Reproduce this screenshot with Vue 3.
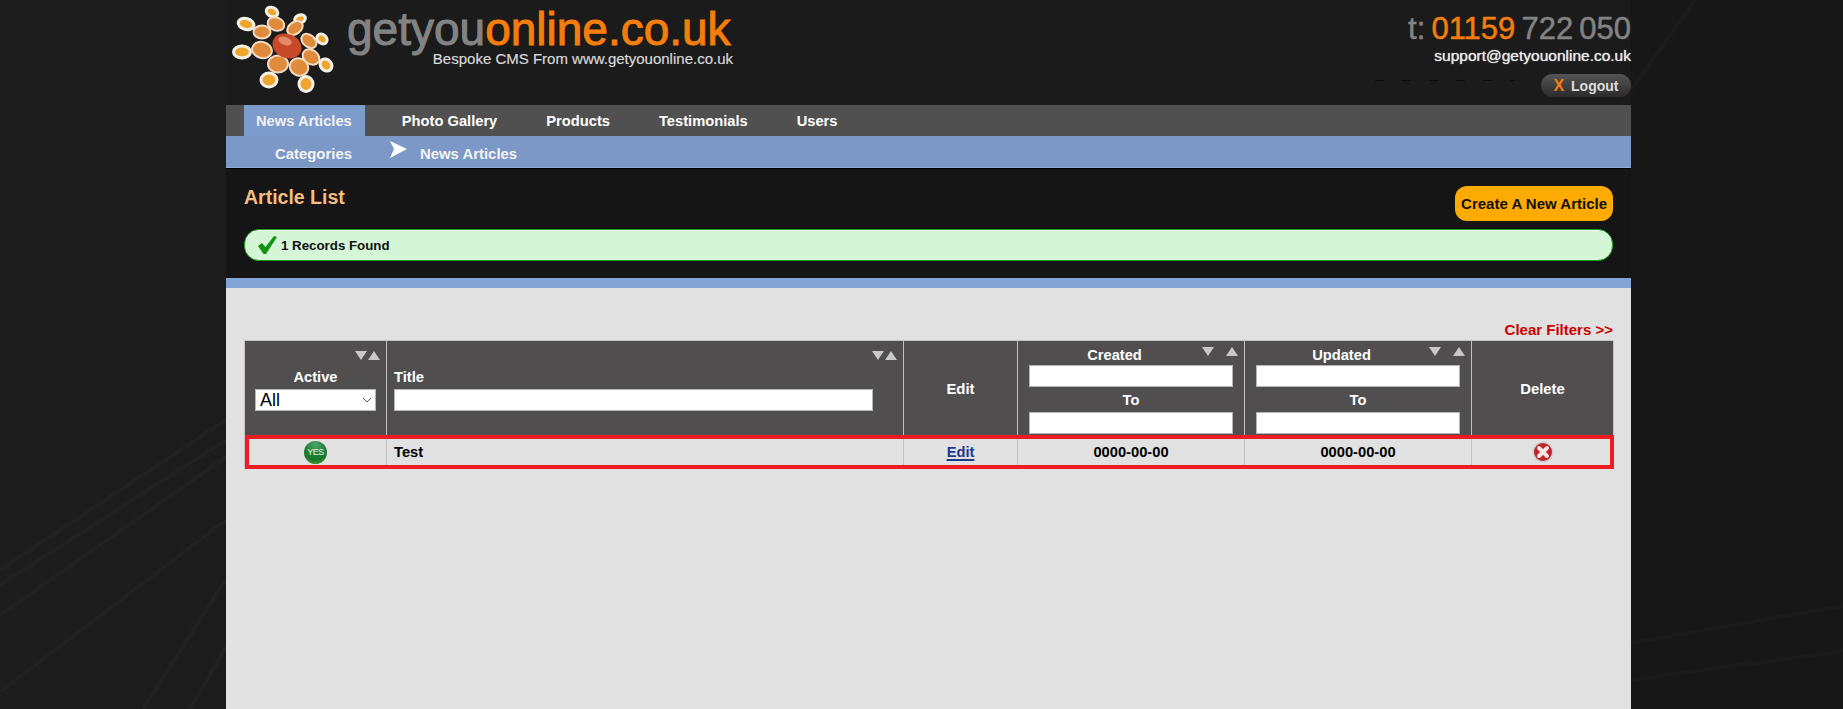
<template>
  <div class="page">
    <svg class="streaks" width="1843" height="709" viewBox="0 0 1843 709">
      <g fill="none" stroke="#212121" stroke-width="4">
        <path d="M0 570 L226 420" />
        <path d="M0 585 L226 440" />
        <path d="M0 615 L226 457" />
        <path d="M0 692 L226 520" />
        <path d="M143 709 L226 579" />
        <path d="M190 709 L226 647" />
      </g>
      <g fill="none" stroke="#1b1b1b" stroke-width="4">
        <path d="M1631 90 L1695 0" />
        <path d="M1631 643 L1843 606" />
        <path d="M1631 680 L1843 651" />
      </g>
    </svg>
    <div class="wrap">
      <header class="top">
        <div class="brand">
          <svg class="logo" width="116" height="100" viewBox="0 0 116 100">
            <g fill="#f0a52f" stroke="#f4f1e8" stroke-width="3">
              <ellipse cx="46" cy="12" rx="6" ry="4.5" transform="rotate(25 46 12)" />
              <ellipse cx="74" cy="19" rx="5.5" ry="4" transform="rotate(-20 74 19)" />
              <ellipse cx="20" cy="24" rx="8" ry="5.5" transform="rotate(15 20 24)" />
              <ellipse cx="96" cy="39" rx="5.5" ry="4.5" transform="rotate(40 96 39)" />
              <ellipse cx="16" cy="52" rx="8.5" ry="6" />
              <ellipse cx="100" cy="65" rx="6.5" ry="5.5" transform="rotate(50 100 65)" />
              <ellipse cx="43" cy="80" rx="8" ry="7" />
              <ellipse cx="80" cy="84" rx="7" ry="7.5" />
            </g>
            <g fill="#e08a3c" stroke="#f2dcc2" stroke-width="2">
              <ellipse cx="50" cy="24" rx="8.5" ry="6.5" transform="rotate(20 50 24)" />
              <ellipse cx="69" cy="28" rx="8.5" ry="6" transform="rotate(-35 69 28)" />
              <ellipse cx="36" cy="32" rx="8.5" ry="6.5" />
              <ellipse cx="83" cy="41" rx="8.5" ry="6" transform="rotate(40 83 41)" />
              <ellipse cx="36" cy="50" rx="10" ry="8" transform="rotate(15 36 50)" />
              <ellipse cx="85" cy="57" rx="9" ry="7" transform="rotate(35 85 57)" />
              <ellipse cx="52" cy="64" rx="10" ry="8.5" />
              <ellipse cx="73" cy="67" rx="9.5" ry="8.5" transform="rotate(30 73 67)" />
            </g>
            <ellipse cx="61" cy="46" rx="15" ry="12" transform="rotate(25 61 46)" fill="#c8492a" />
            <ellipse cx="59" cy="41" rx="7" ry="4" transform="rotate(20 59 41)" fill="#e28a68" />
          </svg>
          <div class="wordmark">
            <div class="name"><span class="grey">getyou</span><span class="orange">online.co.uk</span></div>
            <div class="tagline">Bespoke CMS From www.getyouonline.co.uk</div>
          </div>
        </div>
        <div class="contact">
          <div class="phone"><span class="grey">t:</span> <span class="orange">01159</span> <span class="grey">722 050</span></div>
          <div class="email">support@getyouonline.co.uk</div>
          <div class="logout-row">
            <span class="specks"></span>
            <a class="logout"><span class="x">X</span> Logout</a>
          </div>
        </div>
      </header>

      <nav class="nav">
        <a v-for="item in navItems" :key="item" class="nav-item" :class="{ active: item === 'News Articles' }">{{ item }}</a>
      </nav>
      <nav class="subnav">
        <a class="sub-item">Categories</a>
        <svg class="sub-arrow" width="18" height="17" viewBox="0 0 18 17"><path d="M1 0 L18 8 L1 17 L5 8 Z" fill="#fff" /></svg>
        <a class="sub-item">News Articles</a>
      </nav>

      <section class="head">
        <div class="head-row">
          <h1>Article List</h1>
          <a class="create">Create A New Article</a>
        </div>
        <div class="found">
          <svg width="21" height="20" viewBox="0 0 21 20"><path d="M1 11 L5 8 L8.5 12 L17 1 L20 2 L9 19 L6.5 19 Z" fill="#109410" /></svg>
          <span>1 Records Found</span>
        </div>
      </section>
      <div class="band"></div>

      <main class="content">
        <a class="clear">Clear Filters &gt;&gt;</a>
        <table class="list">
          <colgroup>
            <col v-for="w in colWidths" :key="w.id" :style="{ width: w.px + 'px' }" />
          </colgroup>
          <thead>
            <tr>
              <th class="top-align">
                <div class="sorts sorts-tight"><i class="down"></i><i class="up"></i></div>
                <div class="label stacked">Active</div>
                <div class="select-box">
                  <select class="filter-select"><option>All</option></select>
                  <svg class="chevron" width="10" height="6" viewBox="0 0 10 6"><path d="M1 1 L5 5 L9 1" fill="none" stroke="#555" stroke-width="1" /></svg>
                </div>
              </th>
              <th class="top-align title-col">
                <div class="sorts sorts-tight"><i class="down"></i><i class="up"></i></div>
                <div class="label stacked title-label">Title</div>
                <input class="filter title-input" type="text" />
              </th>
              <th class="plain">Edit</th>
              <th v-for="col in dateCols" :key="col" class="top-align date-col">
                <div class="date-head">
                  <span class="label">{{ col }}</span>
                  <div class="sorts sorts-wide"><i class="down"></i><i class="up"></i></div>
                </div>
                <input class="filter" type="text" />
                <div class="label to">To</div>
                <input class="filter" type="text" />
              </th>
              <th class="plain">Delete</th>
            </tr>
          </thead>
          <tbody>
            <tr class="row">
              <td>
                <span class="yes">YES</span>
              </td>
              <td class="left">Test</td>
              <td><a class="edit">Edit</a></td>
              <td>0000-00-00</td>
              <td>0000-00-00</td>
              <td>
                <svg class="del" width="22" height="22" viewBox="0 0 22 22">
                  <circle cx="11" cy="11" r="10.5" fill="#cfcfcf" />
                  <circle cx="11" cy="11" r="9" fill="#c4212a" />
                  <path d="M7 7 L15 15 M15 7 L7 15" stroke="#f0e4e4" stroke-width="4" stroke-linecap="round" />
                </svg>
              </td>
            </tr>
          </tbody>
        </table>
      </main>
    </div>
  </div>
</template>

<script setup>
const navItems = ['News Articles', 'Photo Gallery', 'Products', 'Testimonials', 'Users']
const dateCols = ['Created', 'Updated']
const colWidths = [
  { id: 'active', px: 142 },
  { id: 'title', px: 517 },
  { id: 'edit', px: 114 },
  { id: 'created', px: 227 },
  { id: 'updated', px: 227 },
  { id: 'delete', px: 142 },
]
</script>

<style>
html, body {
  margin: 0;
  background: #1c1c1c;
}
</style>

<style scoped>
.page {
  position: relative;
  height: 709px;
  overflow: hidden;
  background: linear-gradient(90deg, #1d1d1d 0, #1c1c1c 226px, #171717 1631px);
  font-family: "Liberation Sans", Arial, sans-serif;
}
.streaks {
  position: absolute;
  left: 0;
  top: 0;
}
.wrap {
  position: relative;
  width: 1405px;
  height: 709px;
  margin-left: 226px;
  display: flex;
  flex-direction: column;
}
.top {
  height: 105px;
  display: flex;
  justify-content: space-between;
  background: #1b1b1b;
}
.brand {
  display: flex;
}
.logo {
  display: block;
}
.wordmark {
  margin-left: 5px;
  width: 386px;
}
.name {
  margin-top: 6px;
  font-size: 46px;
  line-height: 46px;
  -webkit-text-stroke: 1px currentColor;
  white-space: nowrap;
}
.grey {
  color: #838383;
}
.orange {
  color: #f47d0b;
}
.tagline {
  color: #d8d8d8;
  font-size: 15px;
  line-height: 14px;
  -webkit-text-stroke: 0.2px currentColor;
  text-align: right;
  white-space: nowrap;
}
.contact {
  display: flex;
  flex-direction: column;
  align-items: flex-end;
}
.phone {
  margin-top: 12px;
  font-size: 31px;
  line-height: 34px;
  word-spacing: -2.5px;
  -webkit-text-stroke: 0.5px currentColor;
  white-space: nowrap;
}
.email {
  margin-top: 1px;
  color: #e8e8e8;
  font-size: 15.5px;
  line-height: 18px;
  text-shadow: 0 0 1px #e8e8e8;
}
.logout-row {
  display: flex;
  margin-top: 9px;
}
.specks {
  width: 140px;
  height: 1px;
  margin: 6px 26px 0 0;
  background: repeating-linear-gradient(90deg, #0b0b0b 0 9px, transparent 9px 27px);
}
.logout {
  width: 90px;
  height: 23px;
  border-radius: 12px;
  background: linear-gradient(#555, #2b2b2b);
  color: #ddd;
  font-size: 14px;
  font-weight: bold;
  line-height: 23px;
  text-align: center;
  white-space: nowrap;
}
.x {
  margin-right: 3px;
  color: #f47d0b;
  font-size: 16px;
}
.nav {
  height: 31px;
  display: flex;
  padding-left: 18px;
  background: #505050;
}
.nav-item {
  height: 31px;
  padding: 0 12px;
  margin-right: 25px;
  color: #fff;
  font-size: 14.7px;
  font-weight: bold;
  line-height: 33px;
}
.nav-item.active {
  padding-right: 13px;
  background: #7d9bcb;
  color: #f2f2f2;
}
.subnav {
  display: flex;
  align-items: center;
  padding: 4px 0 0 49px;
  box-sizing: border-box;
  height: 32px;
  background: #7b98c6;
  border-bottom: 1px solid #8fabd6;
}
.sub-item {
  color: #f3f3f3;
  font-size: 14.9px;
  font-weight: bold;
}
.sub-arrow {
  margin: 0 13px 8px 37px;
}
.head {
  height: 110px;
  padding: 0 18px;
  box-sizing: border-box;
  background: #151515;
  border-top: 1px solid #000;
}
.head-row {
  height: 60px;
  display: flex;
  justify-content: space-between;
}
h1 {
  margin: 15px 0 0;
  color: #f7bd80;
  font-size: 19.5px;
  font-weight: bold;
  line-height: 26px;
}
.create {
  height: 35px;
  margin-top: 17px;
  padding: 0 6px;
  border-radius: 12px;
  background: #fdab00;
  color: #111;
  font-size: 15px;
  font-weight: bold;
  line-height: 35px;
}
.found {
  height: 32px;
  box-sizing: border-box;
  display: flex;
  align-items: center;
  gap: 3px;
  padding-left: 12px;
  border: 1px solid #1b9b1b;
  border-radius: 15px;
  background: #d5f5d7;
  box-shadow: inset 0 1px 0 #f3fff3;
  color: #111;
  font-size: 13.3px;
  font-weight: bold;
}
.band {
  height: 10px;
  background: #83a4d5;
}
.content {
  flex: 1;
  padding: 32px 18px 0;
  background: #e1e1e1;
}
.clear {
  display: block;
  color: #cc0000;
  font-size: 15px;
  font-weight: bold;
  line-height: 20px;
  text-align: right;
}
.list {
  width: 1369px;
  table-layout: fixed;
  border-collapse: collapse;
}
th {
  height: 94px;
  padding: 0;
  border: 1px solid #c3c3c3;
  border-bottom: 0;
  background: #504e4f;
  color: #fff;
  font-size: 14.9px;
  font-weight: bold;
  text-align: center;
  vertical-align: middle;
  overflow: hidden;
}
.plain {
  padding-top: 2px;
  box-sizing: border-box;
}
.top-align {
  vertical-align: top;
}
.sorts {
  display: flex;
  justify-content: flex-end;
  align-items: center;
}
.sorts-tight {
  gap: 1px;
  height: 9px;
  margin: 10px 6px 0 0;
}
.sorts-wide {
  position: absolute;
  right: 6px;
  top: 6px;
  gap: 12px;
}
.down {
  width: 0;
  height: 0;
  border-left: 6px solid transparent;
  border-right: 6px solid transparent;
  border-top: 9px solid #c8c8c8;
}
.up {
  width: 0;
  height: 0;
  border-left: 6px solid transparent;
  border-right: 6px solid transparent;
  border-bottom: 9px solid #c8c8c8;
}
.label {
  font-size: 14.7px;
  line-height: 20px;
}
.stacked {
  margin: 7px 0 2px;
}
.title-label {
  padding-left: 7px;
  text-align: left;
}
.select-box {
  position: relative;
  width: 121px;
  margin: 0 auto;
}
.filter-select {
  display: block;
  width: 100%;
  height: 22px;
  padding: 0 0 0 4px;
  appearance: none;
  box-sizing: border-box;
  border: 1px solid #b5b5b5;
  border-radius: 0;
  background: #fff;
  color: #000;
  font-family: "Liberation Sans", Arial, sans-serif;
  font-size: 18px;
}
.chevron {
  position: absolute;
  right: 4px;
  top: 8px;
  pointer-events: none;
}
.filter {
  display: block;
  width: 204px;
  height: 22px;
  margin: 0 auto;
  padding: 0;
  box-sizing: border-box;
  border: 1px solid #b5b5b5;
  background: #fff;
}
.title-input {
  width: 479px;
  margin: 0 0 0 7px;
}
.date-col {
  position: relative;
}
.date-head {
  position: relative;
  height: 24px;
  padding-right: 33px;
  line-height: 29px;
}
.to {
  height: 25px;
  line-height: 27px;
}
td {
  height: 34px;
  padding: 0;
  border-left: 1px solid #c3c3c3;
  border-right: 1px solid #c3c3c3;
  color: #000;
  font-size: 14.7px;
  font-weight: bold;
  text-align: center;
  vertical-align: middle;
}
.left {
  padding-left: 7px;
  text-align: left;
}
.row {
  outline: 4px solid #ed1c24;
  outline-offset: -4px;
}
.yes {
  display: inline-block;
  width: 23px;
  height: 23px;
  border-radius: 50%;
  background: radial-gradient(circle at 50% 15%, #4fa56a, #1c7a34 50%, #1a7a2a 70%, #6ab528);
  color: #e2f4e2;
  font-size: 9px;
  font-weight: normal;
  letter-spacing: -0.5px;
  line-height: 23px;
  vertical-align: middle;
}
.edit {
  color: #1c3a8c;
  text-decoration: underline;
  text-decoration-thickness: 2px;
  text-underline-offset: 2px;
}
.del {
  display: inline-block;
  vertical-align: middle;
}
</style>
